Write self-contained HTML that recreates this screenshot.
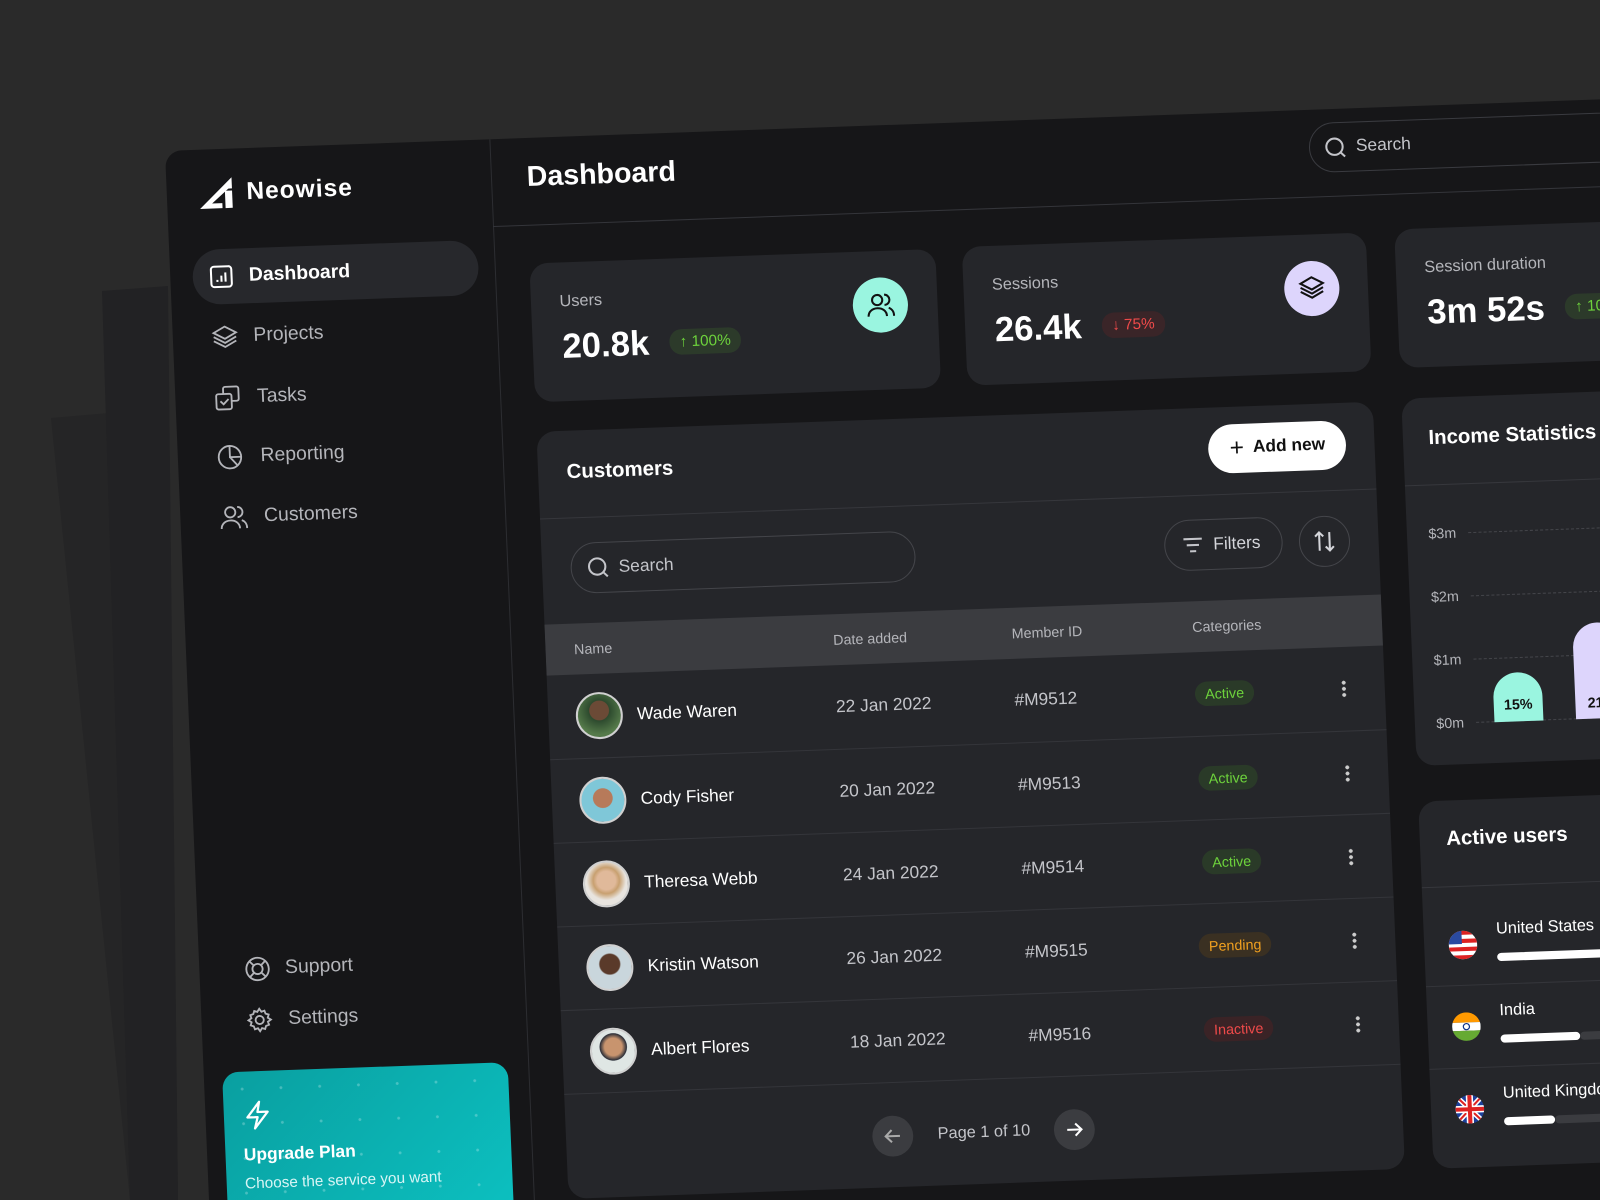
<!DOCTYPE html>
<html><head><meta charset="utf-8"><style>
*{margin:0;padding:0;box-sizing:border-box}
html,body{width:1600px;height:1200px;overflow:hidden}
body{background:#2a2a2a;font-family:"Liberation Sans",sans-serif;position:relative}
.wrap{position:absolute;left:0;top:0;width:1600px;height:1200px;overflow:hidden;background:#2a2a2a}
.app{position:absolute;left:165px;top:151px;width:1500px;height:1150px;background:#161618;border-radius:16px 0 0 0;transform-origin:0 0;transform:matrix(1.02,-0.0367,0.0428,1.02,0,0)}
.a{position:absolute}
.t{position:absolute;white-space:nowrap;transform:translateY(-50%);color:#fff}
.card{position:absolute;background:#25262a;border-radius:18px;overflow:hidden}
.nav{color:#b4b5ba;font-size:19px}
.ic{position:absolute;transform:translateY(-50%)}
.badge{position:absolute;transform:translateY(-50%);border-radius:12px;font-size:15px;padding:4px 10px}
.row{position:absolute;left:0;right:0;height:82px;border-top:1px solid #34353a}
.st{position:absolute;transform:translate(-50%,-50%);font-size:14px;padding:4px 10px;border-radius:12px}
.dots{position:absolute;width:4px;height:18px;transform:translateY(-50%);background:radial-gradient(circle,#ccc 1.8px,transparent 2px) 0 0/4px 6px repeat-y}
.av{position:absolute;width:46px;height:46px;border-radius:50%;transform:translateY(-50%);border:2px solid #d0d0d0;overflow:hidden}
</style></head><body><div class="wrap">
<svg class="a" style="left:0;top:0" width="1600" height="1200">
<polygon points="51,418 168,408 178,1200 130,1200" fill="#252526"/>
<polygon points="102,291 168,286 178,1200 130,1200" fill="#222224"/>
</svg>
<div class="app">
  <div class="a" style="left:318px;top:0;width:1px;height:1150px;background:#2c2d31"></div>
  <svg class="a" style="left:30px;top:26px" width="38" height="34" viewBox="0 0 38 34"><path d="M2 32 L34 2 L34 10 L14 27 L24 27 L24 32 Z" fill="#fff"/><rect x="27" y="15" width="7" height="17" fill="#fff"/><rect x="27" y="10" width="7" height="3" fill="#fff"/></svg>
  <div class="t" style="left:78px;top:43px;font-size:24px;font-weight:bold;letter-spacing:1px">Neowise</div>
  <div class="a" style="left:22px;top:98px;width:280px;height:54px;border-radius:27px;background:#27282c"></div>
  <svg class="ic" style="left:38px;top:125px" width="24" height="24" viewBox="0 0 24 24" fill="none" stroke="#fff" stroke-width="2"><rect x="2" y="2" width="20" height="20" rx="3"/><path d="M8 17v-2M12 17v-6M16 17v-9"/></svg>
  <div class="t" style="left:77px;top:125px;font-size:19px;font-weight:bold">Dashboard</div>
  <svg class="ic" style="left:38px;top:184px" width="26" height="24" viewBox="0 0 26 24" fill="none" stroke="#b4b5ba" stroke-width="1.8"><path d="M13 2 L24 8 L13 14 L2 8 Z"/><path d="M2 12 L13 18 L24 12"/><path d="M2 16 L13 22 L24 16"/></svg>
  <div class="t nav" style="left:79px;top:184px">Projects</div>
  <svg class="ic" style="left:38px;top:244px" width="26" height="26" viewBox="0 0 26 26" fill="none" stroke="#b4b5ba" stroke-width="1.8"><rect x="9" y="2" width="15" height="14" rx="2"/><rect x="2" y="9" width="15" height="15" rx="2" fill="#161618"/><path d="M6 16l3 3 5-5"/></svg>
  <div class="t nav" style="left:80px;top:244px">Tasks</div>
  <svg class="ic" style="left:38px;top:302px" width="26" height="26" viewBox="0 0 26 26" fill="none" stroke="#b4b5ba" stroke-width="1.8"><circle cx="13" cy="13" r="11"/><path d="M13 2v11h11M13 13l7 8"/></svg>
  <div class="t nav" style="left:81px;top:302px">Reporting</div>
  <svg class="ic" style="left:38px;top:361px" width="28" height="24" viewBox="0 0 28 24" fill="none" stroke="#b4b5ba" stroke-width="1.8"><circle cx="11" cy="7" r="5"/><path d="M2 23c0-5 4-8 9-8s9 3 9 8"/><path d="M18 2a5 5 0 010 10M22 15c3 1 5 4 5 8"/></svg>
  <div class="t nav" style="left:82px;top:361px">Customers</div>
  <svg class="ic" style="left:44px;top:804px" width="26" height="26" viewBox="0 0 26 26" fill="none" stroke="#b4b5ba" stroke-width="1.8"><circle cx="13" cy="13" r="11"/><circle cx="13" cy="13" r="5"/><path d="M5 5l4 4M21 5l-4 4M5 21l4-4M21 21l-4-4"/></svg>
  <div class="t nav" style="left:84px;top:804px">Support</div>
  <svg class="ic" style="left:44px;top:854px" width="26" height="26" viewBox="0 0 26 26" fill="none" stroke="#b4b5ba" stroke-width="1.8"><circle cx="13" cy="13" r="4"/><path d="M13 2l2 3 3-1 1 3 3 1-1 3 3 2-3 2 1 3-3 1-1 3-3-1-2 3-2-3-3 1-1-3-3-1 1-3-3-2 3-2-1-3 3-1 1-3 3 1z"/></svg>
  <div class="t nav" style="left:85px;top:854px">Settings</div>
  <div class="a" style="left:18px;top:904px;width:280px;height:200px;border-radius:16px;background:linear-gradient(135deg,#0a9fa0,#0cc4c4);overflow:hidden">
    <div class="a" style="inset:0;background:radial-gradient(circle,rgba(255,255,255,.25) 1.2px,transparent 1.6px) 0 0/38px 34px"></div>
    <svg class="a" style="left:20px;top:28px" width="26" height="30" viewBox="0 0 26 30" fill="none" stroke="#fff" stroke-width="2.2" stroke-linejoin="round"><path d="M15 2 L3 17 H13 L10 28 L23 12 H13 Z"/></svg>
    <div class="t" style="left:18px;top:82px;font-size:17px;font-weight:bold">Upgrade Plan</div>
    <div class="t" style="left:18px;top:110px;font-size:15px;color:#d8f5f5">Choose the service you want</div>
  </div>

  <div class="t" style="left:353px;top:38px;font-size:28px;font-weight:bold">Dashboard</div>
  <div class="a" style="left:318px;top:85px;width:1200px;height:1px;background:#34353a"></div>
  <div class="a" style="left:1120px;top:13px;width:400px;height:49px;border:1px solid #3a3b40;border-radius:25px"></div>
  <svg class="ic" style="left:1135px;top:38px" width="22" height="22" viewBox="0 0 22 22" fill="none" stroke="#c4c5ca" stroke-width="2"><circle cx="10" cy="10" r="8"/><path d="M16 16l4 4"/></svg>
  <div class="t" style="left:1166px;top:37px;font-size:17px;color:#c4c5ca">Search</div>

  <div class="card" style="left:352px;top:123px;width:398px;height:136px">
    <div class="t" style="left:28px;top:39px;font-size:16px;color:#b4b5ba">Users</div>
    <div class="t" style="left:29px;top:83px;font-size:34px;font-weight:bold">20.8k</div>
    <div class="badge" style="left:134px;top:82px;background:#2c3a2a;color:#6dd23c">↑ 100%</div>
    <div class="a" style="left:315px;top:26px;width:54px;height:54px;border-radius:50%;background:#9af5e0"></div>
    <svg class="a" style="left:328px;top:40px" width="28" height="26" viewBox="0 0 28 24" fill="none" stroke="#111" stroke-width="2"><circle cx="11" cy="7" r="5"/><path d="M2 23c0-5 4-8 9-8s9 3 9 8"/><path d="M18 2a5 5 0 010 10M22 15c3 1 5 4 5 8"/></svg>
  </div>
  <div class="card" style="left:776px;top:122px;width:396px;height:136px">
    <div class="t" style="left:28px;top:39px;font-size:16px;color:#b4b5ba">Sessions</div>
    <div class="t" style="left:29px;top:83px;font-size:34px;font-weight:bold">26.4k</div>
    <div class="badge" style="left:134px;top:82px;background:#3a2528;color:#ef4a4a">↓ 75%</div>
    <div class="a" style="left:314px;top:26px;width:54px;height:54px;border-radius:50%;background:#ddd5fc"></div>
    <svg class="a" style="left:328px;top:40px" width="26" height="24" viewBox="0 0 26 24" fill="none" stroke="#111" stroke-width="2"><path d="M13 2 L24 8 L13 14 L2 8 Z"/><path d="M2 12 L13 18 L24 12"/><path d="M2 16 L13 22 L24 16"/></svg>
  </div>
  <div class="card" style="left:1200px;top:120px;width:320px;height:136px">
    <div class="t" style="left:28px;top:39px;font-size:16px;color:#b4b5ba">Session duration</div>
    <div class="t" style="left:29px;top:83px;font-size:34px;font-weight:bold">3m 52s</div>
    <div class="badge" style="left:164px;top:82px;background:#2c3a2a;color:#6dd23c">↑ 100%</div>
  </div>

  <div class="card" style="left:352px;top:288px;width:820px;height:752px">
    <div class="t" style="left:28px;top:41px;font-size:20px;font-weight:bold">Customers</div>
    <div class="a" style="left:657px;top:17px;width:135px;height:48px;border-radius:24px;background:#fff"></div>
    <div class="t" style="left:678px;top:41px;font-size:17px;font-weight:bold;color:#111"><span style="font-size:24px;font-weight:normal;vertical-align:-3px">+</span>&nbsp; Add new</div>
    <div class="a" style="left:0;top:85px;width:820px;height:1px;background:#36373c"></div>
    <div class="a" style="left:28px;top:110px;width:338px;height:50px;border:1px solid #44454a;border-radius:25px"></div>
    <svg class="ic" style="left:44px;top:135px" width="22" height="22" viewBox="0 0 22 22" fill="none" stroke="#c4c5ca" stroke-width="2"><circle cx="10" cy="10" r="8"/><path d="M16 16l4 4"/></svg>
    <div class="t" style="left:75px;top:135px;font-size:17px;color:#c4c5ca">Search</div>
    <div class="a" style="left:610px;top:109px;width:116px;height:50px;border:1px solid #44454a;border-radius:25px"></div>
    <svg class="ic" style="left:628px;top:134px" width="20" height="16" viewBox="0 0 20 16" fill="none" stroke="#c4c5ca" stroke-width="2"><path d="M1 2h18M4 8h12M7 14h6"/></svg>
    <div class="t" style="left:658px;top:134px;font-size:17px;color:#d4d5da">Filters</div>
    <div class="a" style="left:742px;top:110px;width:50px;height:50px;border:1px solid #44454a;border-radius:50%"></div>
    <svg class="a" style="left:756px;top:124px" width="22" height="22" viewBox="0 0 22 22" fill="none" stroke="#d4d5da" stroke-width="2"><path d="M6 20V2M2 6l4-4 4 4M16 2v18M12 16l4 4 4-4"/></svg>
    <div class="a" style="left:0;top:189px;width:820px;height:50px;background:#3b3c40"></div>
    <div class="t" style="left:28px;top:214px;font-size:14px;color:#b4b5ba">Name</div>
    <div class="t" style="left:282px;top:214px;font-size:14px;color:#b4b5ba">Date added</div>
    <div class="t" style="left:457px;top:214px;font-size:14px;color:#b4b5ba">Member ID</div>
    <div class="t" style="left:634px;top:214px;font-size:14px;color:#b4b5ba">Categories</div>

    <div class="row" style="top:239px;border-top:none">
      <div class="av" style="left:27px;top:41px;background:radial-gradient(circle at 50% 38%,#6b4a36 28%,#2d4a2e 30%,#557a4a 70%)"></div>
      <div class="t" style="left:87px;top:41px;font-size:17px">Wade Waren</div>
      <div class="t" style="left:282px;top:41px;font-size:17px;color:#c4c5ca">22 Jan 2022</div>
      <div class="t" style="left:457px;top:41px;font-size:17px;color:#c4c5ca">#M9512</div>
      <div class="st" style="left:663px;top:41px;background:#2a3a28;color:#6dd23c">Active</div>
      <div class="dots" style="left:778px;top:41px"></div>
    </div>
    <div class="row" style="top:321px">
      <div class="av" style="left:27px;top:41px;background:radial-gradient(circle at 50% 45%,#b77a5a 30%,#7fc7d8 32%)"></div>
      <div class="t" style="left:87px;top:41px;font-size:17px">Cody Fisher</div>
      <div class="t" style="left:282px;top:41px;font-size:17px;color:#c4c5ca">20 Jan 2022</div>
      <div class="t" style="left:457px;top:41px;font-size:17px;color:#c4c5ca">#M9513</div>
      <div class="st" style="left:663px;top:41px;background:#2a3a28;color:#6dd23c">Active</div>
      <div class="dots" style="left:778px;top:41px"></div>
    </div>
    <div class="row" style="top:403px">
      <div class="av" style="left:27px;top:41px;background:radial-gradient(circle at 50% 42%,#e0b99a 28%,#c8a070 40%,#e8e4df 60%)"></div>
      <div class="t" style="left:87px;top:41px;font-size:17px">Theresa Webb</div>
      <div class="t" style="left:282px;top:41px;font-size:17px;color:#c4c5ca">24 Jan 2022</div>
      <div class="t" style="left:457px;top:41px;font-size:17px;color:#c4c5ca">#M9514</div>
      <div class="st" style="left:663px;top:41px;background:#2a3a28;color:#6dd23c">Active</div>
      <div class="dots" style="left:778px;top:41px"></div>
    </div>
    <div class="row" style="top:485px">
      <div class="av" style="left:27px;top:41px;background:radial-gradient(circle at 50% 42%,#5a3a2a 30%,#c9d6dc 34%)"></div>
      <div class="t" style="left:87px;top:41px;font-size:17px">Kristin Watson</div>
      <div class="t" style="left:282px;top:41px;font-size:17px;color:#c4c5ca">26 Jan 2022</div>
      <div class="t" style="left:457px;top:41px;font-size:17px;color:#c4c5ca">#M9515</div>
      <div class="st" style="left:663px;top:41px;background:#3a3022;color:#f0a020">Pending</div>
      <div class="dots" style="left:778px;top:41px"></div>
    </div>
    <div class="row" style="top:567px">
      <div class="av" style="left:27px;top:41px;background:radial-gradient(circle at 50% 40%,#c8946e 26%,#2a2e38 40%,#dfe6e4 42%)"></div>
      <div class="t" style="left:87px;top:41px;font-size:17px">Albert Flores</div>
      <div class="t" style="left:282px;top:41px;font-size:17px;color:#c4c5ca">18 Jan 2022</div>
      <div class="t" style="left:457px;top:41px;font-size:17px;color:#c4c5ca">#M9516</div>
      <div class="st" style="left:663px;top:41px;background:#3a2326;color:#ef4a4a">Inactive</div>
      <div class="dots" style="left:778px;top:41px"></div>
    </div>
    <div class="a" style="left:0;top:649px;width:820px;height:1px;background:#34353a"></div>
    <div class="a" style="left:300px;top:682px;width:40px;height:40px;border-radius:50%;background:#3b3c40"></div>
    <svg class="a" style="left:310px;top:692px" width="20" height="20" viewBox="0 0 20 20" fill="none" stroke="#aaa" stroke-width="2"><path d="M17 10H3M9 4l-6 6 6 6"/></svg>
    <div class="t" style="left:364px;top:702px;font-size:16px;color:#c4c5ca">Page 1 of 10</div>
    <div class="a" style="left:478px;top:682px;width:40px;height:40px;border-radius:50%;background:#3b3c40"></div>
    <svg class="a" style="left:488px;top:692px" width="20" height="20" viewBox="0 0 20 20" fill="none" stroke="#fff" stroke-width="2"><path d="M3 10h14M11 4l6 6-6 6"/></svg>
  </div>

  <div class="card" style="left:1200px;top:286px;width:320px;height:360px">
    <div class="t" style="left:25px;top:40px;font-size:20px;font-weight:bold">Income Statistics</div>
    <div class="a" style="left:0;top:85px;width:320px;height:1px;background:#36373c"></div>
    <div class="t" style="left:21px;top:133px;font-size:14px;color:#b4b5ba">$3m</div>
    <div class="t" style="left:21px;top:195px;font-size:14px;color:#b4b5ba">$2m</div>
    <div class="t" style="left:21px;top:257px;font-size:14px;color:#b4b5ba">$1m</div>
    <div class="t" style="left:21px;top:319px;font-size:14px;color:#b4b5ba">$0m</div>
    <div class="a" style="left:60px;top:133px;width:260px;border-top:1px dashed #44454a"></div>
    <div class="a" style="left:60px;top:195px;width:260px;border-top:1px dashed #44454a"></div>
    <div class="a" style="left:60px;top:257px;width:260px;border-top:1px dashed #44454a"></div>
    <div class="a" style="left:60px;top:319px;width:260px;border-top:1px dashed #44454a"></div>
    <div class="a" style="left:78px;top:272px;width:48px;height:48px;border-radius:24px 24px 0 0;background:#9af5e0;color:#111;font-size:14px;font-weight:bold;text-align:center;line-height:62px">15%</div>
    <div class="a" style="left:158px;top:226px;width:48px;height:94px;border-radius:24px 24px 0 0;background:#ddd5fc;color:#111;font-size:14px;font-weight:bold;padding-left:12px;line-height:156px">21%</div>
  </div>

  <div class="card" style="left:1200px;top:681px;width:320px;height:360px">
    <div class="t" style="left:26px;top:38px;font-size:20px;font-weight:bold">Active users</div>
    <div class="a" style="left:0;top:84px;width:320px;height:1px;background:#36373c"></div>
    <svg class="a" style="left:24px;top:128px" width="28" height="28" viewBox="0 0 28 28"><clipPath id="c1"><circle cx="14" cy="14" r="14"/></clipPath><g clip-path="url(#c1)"><rect width="28" height="28" fill="#fff"/><rect y="0" width="28" height="4" fill="#d22"/><rect y="8" width="28" height="4" fill="#d22"/><rect y="16" width="28" height="4" fill="#d22"/><rect y="24" width="28" height="4" fill="#d22"/><rect width="13" height="13" fill="#2a4aa0"/></g></svg>
    <div class="t" style="left:71px;top:128px;font-size:16px">United States</div>
    <div class="a" style="left:71px;top:151px;width:260px;height:8px;border-radius:4px;background:#fff"></div>
    <div class="a" style="left:0;top:181px;width:320px;height:1px;background:#34353a"></div>
    <svg class="a" style="left:24px;top:208px" width="28" height="28" viewBox="0 0 28 28"><clipPath id="c2"><circle cx="14" cy="14" r="14"/></clipPath><g clip-path="url(#c2)"><rect width="28" height="10" fill="#f90"/><rect y="10" width="28" height="8" fill="#fff"/><rect y="18" width="28" height="10" fill="#6a3"/><circle cx="14" cy="14" r="3" fill="none" stroke="#138" stroke-width="1.2"/></g></svg>
    <div class="t" style="left:71px;top:208px;font-size:16px">India</div>
    <div class="a" style="left:71px;top:231px;width:78px;height:8px;border-radius:4px;background:#fff"></div>
    <div class="a" style="left:149px;top:231px;width:180px;height:8px;border-radius:4px;background:#3b3c40"></div>
    <div class="a" style="left:0;top:262px;width:320px;height:1px;background:#34353a"></div>
    <svg class="a" style="left:24px;top:289px" width="28" height="28" viewBox="0 0 28 28"><clipPath id="c3"><circle cx="14" cy="14" r="14"/></clipPath><g clip-path="url(#c3)"><rect width="28" height="28" fill="#1c3f9a"/><path d="M0 0L28 28M28 0L0 28" stroke="#fff" stroke-width="5"/><path d="M0 0L28 28M28 0L0 28" stroke="#d22" stroke-width="2"/><path d="M14 0V28M0 14H28" stroke="#fff" stroke-width="7"/><path d="M14 0V28M0 14H28" stroke="#d22" stroke-width="4"/></g></svg>
    <div class="t" style="left:71px;top:289px;font-size:16px">United Kingdom</div>
    <div class="a" style="left:71px;top:312px;width:50px;height:8px;border-radius:4px;background:#fff"></div>
    <div class="a" style="left:121px;top:312px;width:200px;height:8px;border-radius:4px;background:#3b3c40"></div>
  </div>
</div>
</div></body></html>
